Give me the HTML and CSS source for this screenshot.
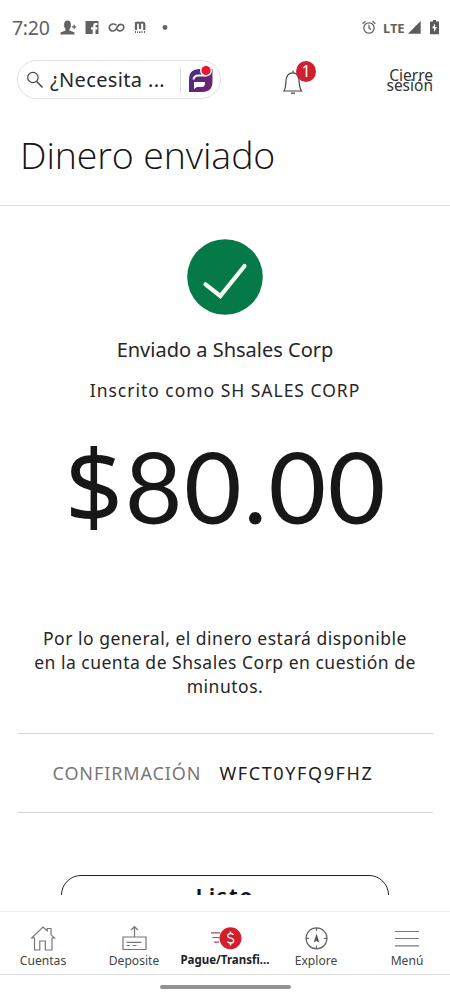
FILE: index.html
```html
<!DOCTYPE html>
<html lang="es">
<head>
<meta charset="utf-8">
<meta name="viewport" content="width=device-width, initial-scale=1">
<title>Dinero enviado</title>
<link rel="stylesheet" href="styles.css">
</head>
<body>
<div class="screen">
  <div class="status">
    <span class="clock">7:20</span>
    <svg class="status-left" width="107" height="16" viewBox="0 0 107 16">
      <g fill="#626262">
        <ellipse cx="6.500" cy="5" rx="3.400" ry="4.400"/>
        <path d="M4.500 8h4v2.500l5 2V14.500H-.5v-2l5-2z"/>
        <path d="M11 6.300h1.500V4.800h1.200v1.500h1.500v1.200h-1.500V9h-1.200V7.500H11z"/>
        <path fill-rule="evenodd" d="M24.500 1h13v13h-3V9.500h1.800V7.300H34.500V5.800q0-.8 1-.8h1V3h-2q-2.300 0-2.300 2.300v2H30v2.200h1.700V14h-7.200z"/>
        <circle cx="104" cy="7.500" r="2.400"/>
        <path d="M74 11h1v2h-1zm2 .5h1V13h-1zm2 0h1.500V13H78zm2.500-.5h1v2h-1zm2.500 0h1v2h-1z"/>
      </g>
      <path d="M55.500 5.400C54 3.300 49 3.200 48.300 7.200c-.5 4 4.600 5.200 6.800 1.800l1.500-2.500c2-3.400 6.300-2.300 6.200 1C62.500 11 57.600 12 55.900 9.300" fill="none" stroke="#626262" stroke-width="1.600"/>
      <path d="M75 10V2M75 4.500q0-2 1.900-2 2.100 0 2.100 2V9M79 4.500q0-2 2.100-2 2.200 0 2.200 2V10" fill="none" stroke="#626262" stroke-width="2.200"/>
    </svg>
    <svg class="alarm" width="14" height="15" viewBox="0 0 14 15" fill="none" stroke="#686868" stroke-width="1.300">
      <circle cx="7" cy="8" r="5.200"/><path d="M7 4.800V8l2 1.700M.6 3.800l3-2.500M13.400 3.800l-3-2.500"/>
    </svg>
    <span class="lte">LTE</span>
    <svg class="signal" width="13" height="15" viewBox="0 0 13 15"><path d="M0 13.800 12.700 1v12.800z" fill="#5c5c5c"/></svg>
    <svg class="battery" width="9" height="15" viewBox="0 0 9 15">
      <path d="M3 0h3v1.500h3V14.300H0V1.500h3z" fill="#5c5c5c"/><path d="M5 3.500 2 8.300h2V12l3-4.900H5z" fill="#fff"/>
    </svg>
  </div>

  <header class="top">
    <div class="search">
      <svg width="18" height="18" viewBox="0 0 18 18" fill="none" stroke="#454545" stroke-width="1.200"><circle cx="6.900" cy="6.500" r="5.200"/><path d="m10.700 10.500 5.800 6" stroke-width="1.500"/></svg>
      <span class="query">¿Necesita ...</span>
      <i class="divider"></i>
      <svg class="assistant" width="28" height="28" viewBox="0 0 28 28">
        <defs><linearGradient id="fargo" x1="0" y1="0" x2="1" y2="1"><stop stop-color="#43338b"/><stop offset="1" stop-color="#7a1e67"/></linearGradient></defs>
        <path d="M2 26V13.500Q2 3 12.500 3H25.500v12.500Q25.500 26 15 26z" fill="url(#fargo)"/>
        <path d="M6.500 13.500Q7 9.500 11.500 9.500h7.500" fill="none" stroke="#fff" stroke-width="2"/>
        <path d="M7 16h11v1.500q0 3.500-3.500 3.500H10l-3 2z" fill="#fff"/>
        <circle cx="19" cy="4.500" r="6" fill="#fff"/><circle cx="19" cy="4.500" r="4.600" fill="#e31b2c"/>
      </svg>
    </div>
    <div class="bell">
      <svg width="34" height="34" viewBox="0 0 34 34">
        <path d="M11 9.500V7.500M2 28c2-3 1.600-6 2-10.500C4.400 12.500 7 9.800 11 9.800S16.600 12.500 17 17.500C17.400 22 17.500 25 19.500 28zM9 30.200h4" fill="none" stroke="#454545" stroke-width="1.200"/>
      </svg>
      <span class="badge">1</span>
    </div>
    <a class="logout">Cierre<br>sesión</a>
  </header>

  <h1 class="title">Dinero enviado</h1>

  <main class="content">
    <svg class="check" width="76" height="76" viewBox="0 0 76 76"><circle cx="38" cy="38" r="37.800" fill="#067949"/><path d="M18.500 45.300 33.300 57 57.500 27" fill="none" stroke="#f2fff7" stroke-width="4.200" stroke-linecap="round"/></svg>
    <p class="sent">Enviado a Shsales Corp</p>
    <p class="enrolled">Inscrito como SH SALES CORP</p>
    <p class="amount"><span class="currency">$</span>80.00</p>
    <p class="note">Por lo general, el dinero estará disponible<br>en la cuenta de Shsales Corp en cuestión de<br>minutos.</p>
    <div class="confirm"><span class="label">CONFIRMACIÓN</span><span class="code">WFCT0YFQ9FHZ</span></div>
    <div class="done">Listo</div>
  </main>

  <nav class="tabs">
    <div class="tab"><svg width="26" height="26" viewBox="0 0 26 26" fill="none" stroke="#747474" stroke-width="1.150"><path d="M4.500 12.500V25h5.300v-9h5.500v9H22V12.500M4.500 13H1.700L13 2l4.200 4V3.500h3.800v6.300L24.500 13H22"/></svg><span>Cuentas</span></div>
    <div class="tab"><svg width="26" height="26" viewBox="0 0 26 26" fill="none" stroke="#747474" stroke-width="1.200"><path d="M2 12h23v12.500H2zM13.500 12V2M10.200 5l3.300-3.300L16.800 5M5.500 17.300h15M5.500 20.500H9m2.500 0h4"/></svg><span>Deposite</span></div>
    <div class="tab active"><svg width="34" height="26" viewBox="0 0 34 26"><path d="M3 7.800h9M4.500 12.500h7M6 17.200h5" stroke="#bd4050" stroke-width="1.200"/><circle cx="22.500" cy="13.300" r="11" fill="#d41e2d"/><path d="M25.500 9.800q-1-1.200-3-1.200-2.800 0-2.800 2.200c0 3 6 1.700 6 4.900q0 2.300-3.100 2.300-2.200 0-3.200-1.400M22.500 6.500v2m0 10v2" fill="none" stroke="#fff" stroke-width="1.400"/></svg><span>Pague/Transfi...</span></div>
    <div class="tab"><svg width="26" height="26" viewBox="0 0 26 26" fill="none" stroke="#666" stroke-width="1.200"><circle cx="13.500" cy="13.300" r="10.500"/><path d="M13.500 3v3m0 14.600v3M3 13.300h3m15 0h3"/><path d="m13.500 8.500-2.700 8.700 2.700-1.200 2.700 1.200z" fill="#555" stroke="none"/></svg><span>Explore</span></div>
    <div class="tab"><svg width="26" height="26" viewBox="0 0 26 26" fill="none" stroke="#777" stroke-width="1.200"><path d="M1 6.500h24M1 13.500h24M1 20.800h24"/></svg><span>Menú</span></div>
  </nav>
  <div class="gesture"><i></i></div>
</div>
</body>
</html>
```
FILE: styles.css
```css
* { box-sizing: border-box; }
body { margin: 0; background: #fff; color: #262626; font-family: "Noto Sans", "Open Sans", sans-serif; }
p, h1 { margin: 0; font-weight: 400; white-space: nowrap; }
svg { display: block; flex: none; }
.screen { width: 450px; height: 1000px; display: flex; flex-direction: column; overflow: hidden; }

.status { height: 55px; padding: 0 11px 0 12px; display: flex; align-items: center; color: #626262; }
.clock { width: 49px; font-size: 19.5px; letter-spacing: -.3px; }
.status-left { margin-right: auto; overflow: visible; }
.alarm { margin-right: 7px; }
.lte { width: 25px; font-size: 13px; font-weight: 700; letter-spacing: -.1px; }
.signal { margin-right: 9px; }

.top { height: 49px; padding: 0 17px; display: flex; align-items: center; }
.search { width: 204px; height: 39px; padding: 0 5px 0 8px; border: 1px solid #e1e1e1; border-radius: 20px; display: flex; align-items: center; }
.query { width: 130px; margin-left: 6px; font-size: 20px; letter-spacing: .35px; white-space: nowrap; }
.divider { width: 1px; height: 26px; background: #ddd; }
.assistant { margin-left: 6px; }
.bell { position: relative; margin-left: 61px; width: 34px; height: 34px; }
.badge { position: absolute; left: 14px; top: -2px; width: 20px; height: 21px; border-radius: 50%; background: #ce2031; color: #fff; font-size: 16px; line-height: 20px; text-align: center; }
.logout { margin-left: auto; font-size: 15.5px; line-height: 10px; text-align: right; color: #333; }

.title { height: 102px; padding-left: 20px; border-bottom: 1px solid #dcdcdc; font-family: "Open Sans", "Noto Sans", sans-serif; font-size: 37.5px; font-weight: 300; line-height: 102px; letter-spacing: -.1px; color: #141414; }

.content { height: 689px; overflow: hidden; display: flex; flex-direction: column; align-items: center; padding-top: 33px; }
.content > * { flex: none; }
.sent { margin-top: 21px; font-size: 20px; line-height: 28px; }
.enrolled { margin-top: 13px; font-size: 17.5px; line-height: 26px; letter-spacing: .98px; }
.amount { margin-top: 18px; height: 130px; padding-left: 2px; font-family: Lato, "Noto Sans", sans-serif; font-size: 99.5px; line-height: 130px; color: #171717; letter-spacing: 1.6px; }
.currency { font-family: "Noto Sans", sans-serif; font-size: 102px; line-height: 1; }
.note { margin-top: 75px; font-size: 17.5px; line-height: 24px; letter-spacing: .5px; text-align: center; }
.confirm { width: 415px; height: 80px; margin-top: 35px; padding: 0 0 0 35px; border-top: 1px solid #d5d5d5; border-bottom: 1px solid #d5d5d5; display: flex; align-items: center; font-size: 18px; }
.label { width: 167px; color: #777; letter-spacing: .9px; }
.code { color: #202020; letter-spacing: 1.6px; }
.done { width: 328px; height: 48px; margin-top: 62px; border: 1.5px solid #222; border-radius: 20px; text-align: center; font-size: 20px; font-weight: 700; line-height: 40px; letter-spacing: 2px; color: #111; }

.tabs { height: 64px; margin-top: 16px; border-top: 1px solid #eee; border-bottom: 1px solid #ddd; display: flex; justify-content: space-between; padding: 13px 0 0; }
.tab { width: 86px; display: flex; flex-direction: column; align-items: center; font-size: 12.1px; line-height: 18px; color: #444; white-space: nowrap; }
.tab span { margin-top: 1px; }
.active { font-weight: 700; font-size: 11.5px; color: #222; }
.active span { margin-top: 0; }
.gesture { height: 25px; padding-top: 10px; }
.gesture i { display: block; width: 131px; height: 4px; margin: 0 auto; border-radius: 2px; background: #929292; }
```
